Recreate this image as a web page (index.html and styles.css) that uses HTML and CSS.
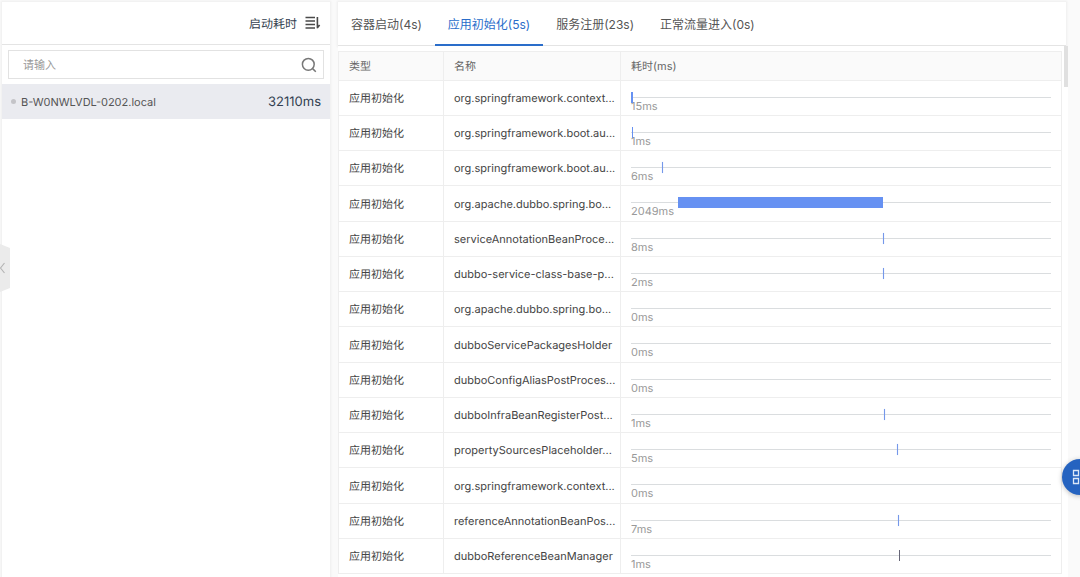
FILE: index.html
```
<!DOCTYPE html>
<html lang="zh-CN">
<head>
<meta charset="utf-8">
<meta name="viewport" content="width=device-width, initial-scale=1">
<title>启动耗时</title>
<link rel="stylesheet" href="styles.css">
</head>
<body>
<div class="layout">
  <aside class="sidebar">
    <header class="sidebar-head">
      <span>启动耗时</span>
      <button class="icon-button" type="button" aria-label="排序">
        <svg width="16" height="14" viewBox="0 0 16 14" fill="none" stroke="#4a4a4a" stroke-width="1.6"><path d="M0.5 1.5h9.5M0.5 5h9.5M0.5 8.5h9.5M0.5 12h9.5M12.4 1v11.2M12.2 12l2.4-3"/></svg>
      </button>
    </header>
    <div class="search">
      <input class="search-input" type="text" placeholder="请输入" aria-label="请输入">
      <button class="icon-button" type="button" aria-label="搜索">
        <svg width="16" height="16" viewBox="0 0 16 16" fill="none" stroke="#777" stroke-width="1.5"><circle cx="7.3" cy="7.3" r="5.9"/><path d="M11.6 11.6l3.2 3.2"/></svg>
      </button>
    </div>
    <div class="host">
      <span class="host-dot"></span>
      <span class="host-name">B-W0NWLVDL-0202.local</span>
      <span class="host-time">32110ms</span>
    </div>
  </aside>

  <main class="content">
    <nav class="tabs">
      <button class="tab" type="button">容器启动(4s)</button>
      <button class="tab tab-active" type="button">应用初始化(5s)</button>
      <button class="tab" type="button">服务注册(23s)</button>
      <button class="tab" type="button">正常流量进入(0s)</button>
    </nav>
    <div class="table-area">
      <table class="table">
        <colgroup><col class="col-type"><col class="col-name"><col></colgroup>
        <thead><tr><th>类型</th><th>名称</th><th>耗时(ms)</th></tr></thead>
        <tbody>
          <tr><td>应用初始化</td><td>org.springframework.context...</td><td><div class="track"><span class="bar bar-short" style="left:0%"></span></div><span class="cost">15ms</span></td></tr>
          <tr><td>应用初始化</td><td>org.springframework.boot.au...</td><td><div class="track"><span class="bar" style="left:0.2%"></span></div><span class="cost">1ms</span></td></tr>
          <tr><td>应用初始化</td><td>org.springframework.boot.au...</td><td><div class="track"><span class="bar bar-light" style="left:7.4%"></span></div><span class="cost">6ms</span></td></tr>
          <tr><td>应用初始化</td><td>org.apache.dubbo.spring.bo...</td><td><div class="track"><span class="bar" style="left:11.2%;width:48.8%"></span></div><span class="cost">2049ms</span></td></tr>
          <tr><td>应用初始化</td><td>serviceAnnotationBeanProce...</td><td><div class="track"><span class="bar bar-light" style="left:60%"></span></div><span class="cost">8ms</span></td></tr>
          <tr><td>应用初始化</td><td>dubbo-service-class-base-p...</td><td><div class="track"><span class="bar bar-light" style="left:60%"></span></div><span class="cost">2ms</span></td></tr>
          <tr><td>应用初始化</td><td>org.apache.dubbo.spring.bo...</td><td><div class="track"></div><span class="cost">0ms</span></td></tr>
          <tr><td>应用初始化</td><td>dubboServicePackagesHolder</td><td><div class="track"></div><span class="cost">0ms</span></td></tr>
          <tr><td>应用初始化</td><td>dubboConfigAliasPostProces...</td><td><div class="track"></div><span class="cost">0ms</span></td></tr>
          <tr><td>应用初始化</td><td>dubboInfraBeanRegisterPost...</td><td><div class="track"><span class="bar bar-light" style="left:60.2%"></span></div><span class="cost">1ms</span></td></tr>
          <tr><td>应用初始化</td><td>propertySourcesPlaceholder...</td><td><div class="track"><span class="bar bar-light" style="left:63.4%"></span></div><span class="cost">5ms</span></td></tr>
          <tr><td>应用初始化</td><td>org.springframework.context...</td><td><div class="track"></div><span class="cost">0ms</span></td></tr>
          <tr><td>应用初始化</td><td>referenceAnnotationBeanPos...</td><td><div class="track"><span class="bar bar-light" style="left:63.6%"></span></div><span class="cost">7ms</span></td></tr>
          <tr><td>应用初始化</td><td>dubboReferenceBeanManager</td><td><div class="track"><span class="bar bar-dark" style="left:63.8%"></span></div><span class="cost">1ms</span></td></tr>
        </tbody>
      </table>
      <div class="scroll-thumb"></div>
    </div>
  </main>
</div>

<button class="collapse" type="button" aria-label="收起">
  <svg width="10" height="48" viewBox="0 0 10 48"><path d="M0 0L10 4V44L0 48Z" fill="#ebebeb"/><path d="M4.5 19L0.5 24l4 5" fill="none" stroke="#b5b5b5" stroke-width="1.2"/></svg>
</button>
<button class="float-button" type="button" aria-label="应用">
  <svg width="18" height="16" viewBox="0 0 18 16" fill="none" stroke="#dce7f7" stroke-width="1.3"><path d="M1.5 1.5h5v5h-5zM1.5 9.5h5v5h-5zM9.5 1.5h5v5h-5zM9.5 9.5h5v5h-5z"/></svg>
</button>
</body>
</html>
```
FILE: styles.css
```
* {
  box-sizing: border-box;
}

body {
  margin: 0;
  height: 100vh;
  overflow: hidden;
  background: #fafafa;
  color: #444;
  font-family: Inter, "Noto Sans CJK SC", sans-serif;
  font-size: 11px;
  text-rendering: geometricPrecision;
}

button {
  padding: 0;
  border: 0;
  background: none;
  font: inherit;
  color: inherit;
}

svg {
  display: block;
}

.layout {
  display: grid;
  grid-template-columns: 328px minmax(0, 1fr);
  gap: 8px;
  height: 100vh;
  padding: 2px 12px 0 2px;
}

.sidebar {
  background: #fff;
  box-shadow: 0 0 2px 1px #eee;
}

.sidebar-head {
  display: flex;
  align-items: center;
  justify-content: flex-end;
  gap: 8px;
  height: 43px;
  padding-right: 9px;
  border-bottom: 1px solid #e4e4e4;
  color: #333f50;
  font-size: 12px;
}

.search {
  display: flex;
  align-items: center;
  height: 29px;
  margin: 5px 6px;
  padding: 0 6px 0 14px;
  border: 1px solid #e2e2e2;
}

.search-input {
  flex: 1;
  min-width: 0;
  padding: 0;
  border: 0;
  outline: 0;
  background: none;
  font: inherit;
}

.search-input::placeholder {
  color: #999;
}

.host {
  display: flex;
  align-items: center;
  gap: 5px;
  height: 35px;
  padding: 0 9px;
  background: #eaebf0;
}

.host-dot {
  width: 5px;
  height: 5px;
  border-radius: 50%;
  background: #c4c4c8;
}

.host-name {
  flex: 1;
  color: #555;
}

.host-time {
  color: #333f50;
  font-size: 13px;
}

.content {
  display: flex;
  flex-direction: column;
  min-width: 0;
  min-height: 0;
}

.tabs {
  display: flex;
  flex: none;
  height: 44px;
  margin-right: 2px;
  border-bottom: 1px solid #e4e4e4;
  background: #fff;
  box-shadow: 0 0 2px 1px #eee;
  color: #555;
  font-size: 12px;
}

.tab {
  height: 44px;
  padding: 0 13px;
  border-bottom: 2px solid transparent;
}

.tab-active {
  border-color: #2a6dca;
  color: #2a6dca;
}

.table-area {
  position: relative;
  flex: 1;
  min-height: 0;
  padding: 5px 6px 0 0;
  overflow: hidden;
  background: #fff;
}

.table {
  width: 100%;
  table-layout: fixed;
  border-collapse: separate;
  border-spacing: 0;
  border-top: 1px solid #eee;
  border-left: 1px solid #eee;
}

.col-type {
  width: 105px;
}

.col-name {
  width: 177px;
}

th,
td {
  height: 35px;
  padding: 0 10px;
  border-right: 1px solid #eee;
  border-bottom: 1px solid #eee;
  text-align: left;
  white-space: nowrap;
}

th {
  height: 29px;
  background: #fafafa;
  color: #666;
  font-weight: 400;
}

tr:nth-child(4n) td {
  height: 36px;
}

.track {
  position: relative;
  height: 1px;
  margin-top: 13px;
  background: #dadddf;
}

.bar {
  position: absolute;
  top: -5px;
  width: 1px;
  height: 11px;
  background: #6691f2;
}

.bar-short {
  width: 2px;
}

.bar-light {
  background: #7598ea;
  box-shadow: 0 0 1px #a9c0f5;
}

.bar-dark {
  background: #667;
}

.cost {
  display: block;
  margin-top: 2px;
  color: #999;
  line-height: 13px;
}

.scroll-thumb {
  position: absolute;
  top: 0;
  right: 0;
  width: 4px;
  height: 41px;
  background: #e0e0e0;
}

.collapse {
  position: absolute;
  top: 244px;
  left: 0;
}

.float-button {
  position: fixed;
  right: -18px;
  bottom: 82px;
  width: 36px;
  height: 36px;
  padding-left: 10px;
  border-radius: 50%;
  background: #2563c0;
  box-shadow: 0 1px 5px rgba(0, 0, 0, 0.25);
}
```
